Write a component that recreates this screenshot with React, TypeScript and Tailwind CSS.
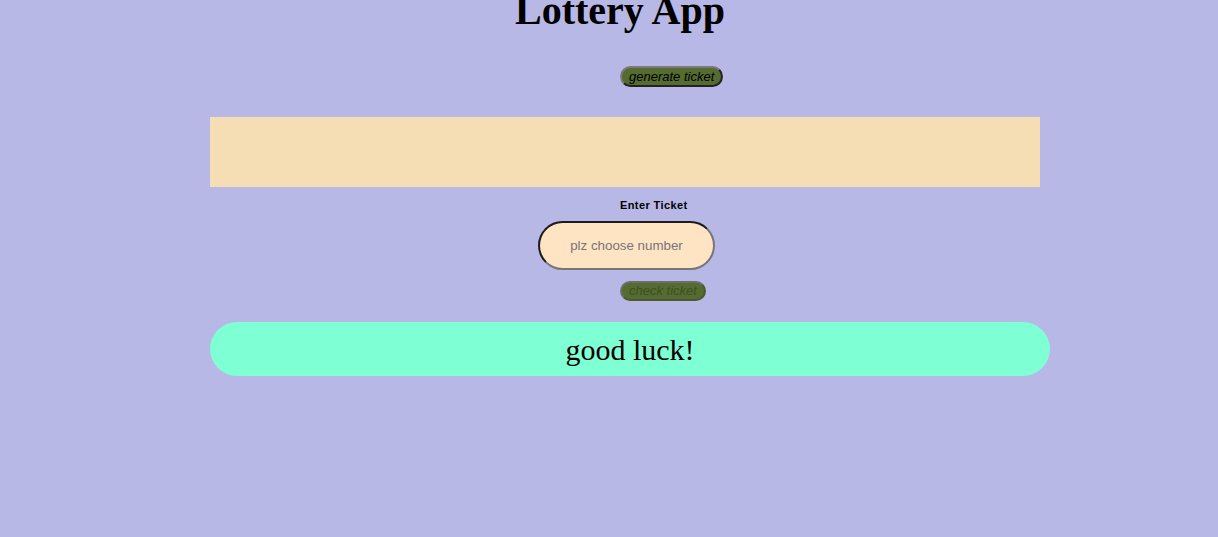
import React from "react";

export default function App() {
  return (
    <div className="min-h-[537px] w-full bg-[#b8b8e6] overflow-hidden">
      <h1
        className="mt-[-9px] pl-[22px] text-center text-[40px] leading-[40px] font-bold text-black"
        style={{ fontFamily: '"Liberation Serif", "Times New Roman", serif' }}
      >
        Lottery App
      </h1>
      <div className="flex flex-col items-start" style={{ fontFamily: '"Liberation Sans", Arial, sans-serif' }}>
        <button className="ml-[620px] mt-[35px] h-[21px] rounded-full border-2 border-t-[#7a7a7a] border-l-[#7a7a7a] border-b-[#222] border-r-[#222] bg-[#556b2f] px-[7px] text-[13px] leading-[15px] italic text-black">
          generate ticket
        </button>
        <div className="ml-[210px] mt-[30px] h-[70px] w-[830px] bg-[#f5deb3]" />
        <label className="ml-[620px] mt-[12px] text-[11px] leading-[12px] font-bold tracking-[0.4px] text-black">
          Enter Ticket
        </label>
        <input
          placeholder="plz choose number"
          className="ml-[538px] mt-[10px] h-[49px] w-[177px] rounded-full border-2 border-t-[#1c1c1c] border-l-[#1c1c1c] border-b-[#767676] border-r-[#767676] bg-[#ffe4c4] text-center text-[13.33px] text-black placeholder:text-[#757575] outline-none"
        />
        <button
          disabled
          className="ml-[620px] mt-[11px] h-[20px] rounded-full border-2 border-t-[#6d6d6d] border-l-[#6d6d6d] border-b-[#4a5a30] border-r-[#4a5a30] bg-[#556b2f] px-[7px] text-[13px] leading-[14px] italic text-[#3f4f25]"
        >
          check ticket
        </button>
        <div
          className="ml-[210px] mt-[21px] flex h-[54px] w-[840px] items-center justify-center rounded-full bg-[#7fffd4] text-[30px] text-black"
          style={{ fontFamily: '"Liberation Serif", "Times New Roman", serif' }}
        >
          good luck!
        </div>
      </div>
    </div>
  );
}
